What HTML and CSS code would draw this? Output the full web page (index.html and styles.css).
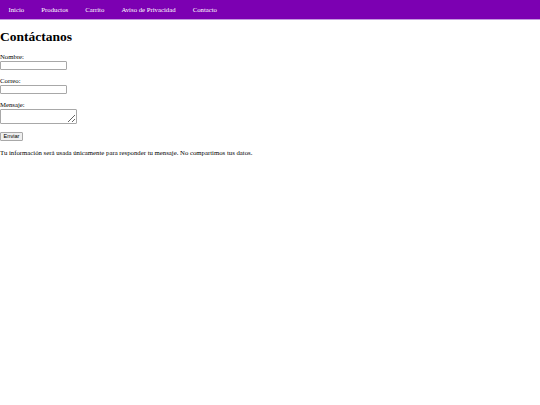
FILE: index.html
```html
<!DOCTYPE html>
<html lang="es">
<head>
<meta charset="utf-8">
<title>Contacto</title>
<link rel="stylesheet" href="styles.css">
</head>
<body>
<nav class="nav">
  <a href="#">Inicio</a>
  <a href="#">Productos</a>
  <a href="#">Carrito</a>
  <a href="#">Aviso de Privacidad</a>
  <a href="#">Contacto</a>
</nav>
<h1 class="title">Contáctanos</h1>
<form class="form">
  <label class="label">Nombre:</label>
  <input class="field" type="text">
  <label class="label">Correo:</label>
  <input class="field" type="email">
  <label class="label">Mensaje:</label>
  <textarea class="area"></textarea>
  <button class="btn" type="button">Enviar</button>
</form>
<p class="note">Tu información será usada únicamente para responder tu mensaje. No compartimos tus datos.</p>
</body>
</html>
```
FILE: styles.css
```css
html, body {
  margin: 0;
  padding: 0;
  background: #fff;
  font-family: "Liberation Serif", "Times New Roman", serif;
  font-size: 6.75px;
  color: #000;
}
.nav {
  display: flex;
  background: #7c00b2;
  border-bottom: 1px solid #c59ade;
  height: 19px;
  align-items: center;
}
.nav a {
  color: #fff;
  text-decoration: none;
  padding: 0 8.5px;
  font-size: 6.75px;
}
.title {
  font-size: 13.5px;
  font-weight: bold;
  margin: 9px 0 8px;
  line-height: 16px;
}
.form {
  display: flex;
  flex-direction: column;
  align-items: flex-start;
}
.label {
  line-height: 8px;
  height: 8px;
}
.field {
  box-sizing: border-box;
  width: 67px;
  height: 9px;
  border: 1px solid #a8a8a8;
  border-radius: 1px;
  padding: 0;
  margin: 0 0 7px;
  font-size: 6px;
  background: #fff;
}
.area {
  box-sizing: border-box;
  width: 77px;
  height: 15px;
  border: 1px solid #a8a8a8;
  border-radius: 1px;
  padding: 0;
  margin: 0 0 8px;
  resize: both;
  font-size: 6px;
  background: #fff;
}
.btn {
  box-sizing: border-box;
  font-family: "Liberation Sans", Arial, sans-serif;
  font-size: 5.6px;
  width: 23px;
  height: 9px;
  padding: 0;
  border: 1px solid #a8a8a8;
  border-radius: 1px;
  background: #efefef;
  color: #000;
  line-height: 7px;
}
.note {
  margin: 8px 0;
  line-height: 8px;
}
```
